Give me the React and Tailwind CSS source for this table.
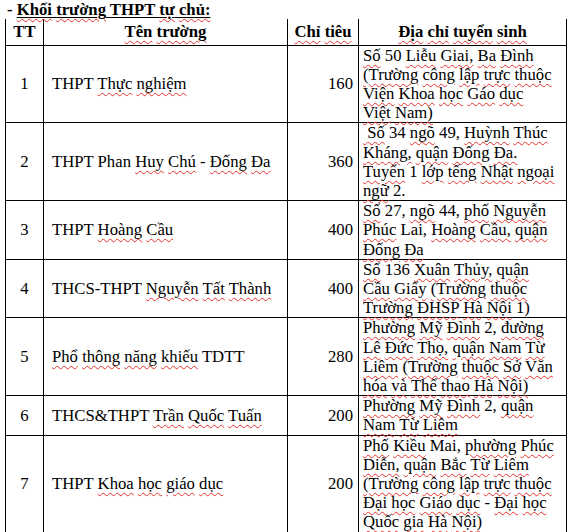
import React from "react";

const NO_UL = new Set(["THPT", "THCS-THPT", "THCS&THPT", "TDTT", "Phan", "-", "Lai,", "Mai,"]);

function Words({ text }) {
  const parts = text.split(" ");
  return (
    <>
      {parts.map((w, i) => {
        const sep = i < parts.length - 1 ? " " : "";
        if (w === "") return <span key={i}>{sep}</span>;
        const plain = NO_UL.has(w) || /^[\d().,]+$/.test(w);
        return (
          <React.Fragment key={i}>
            {plain ? (
              <span>{w}</span>
            ) : (
              <span className="underline decoration-wavy decoration-[#e5322d] decoration-1 underline-offset-[3px]">
                {w}
              </span>
            )}
            {sep}
          </React.Fragment>
        );
      })}
    </>
  );
}

const rows = [
  ["1", "THPT Thực nghiệm", "160", ["Số 50 Liễu Giai, Ba Đình", "(Trường công lập trực thuộc", "Viện Khoa học Gáo dục", "Việt Nam)"]],
  ["2", "THPT Phan Huy Chú - Đống Đa", "360", ["\u00a0Số 34 ngõ 49, Huỳnh Thúc", "Kháng, quận Đống Đa.", "Tuyển 1 lớp tếng Nhật ngoại", "ngữ 2."]],
  ["3", "THPT Hoàng Cầu", "400", ["Số 27, ngõ 44, phố Nguyễn", "Phúc Lai, Hoàng Cầu, quận", "Đống Đa"]],
  ["4", "THCS-THPT Nguyễn Tất Thành", "400", ["Số 136 Xuân Thủy, quận", "Cầu Giấy (Trường thuộc", "Trường ĐHSP Hà Nội 1)"]],
  ["5", "Phổ thông năng khiếu TDTT", "280", ["Phường Mỹ Đình 2, đường", "Lê Đức Thọ, quận Nam Từ", "Liêm (Trường thuộc Sở Văn", "hóa và Thể thao Hà Nội)"]],
  ["6", "THCS&THPT Trần Quốc Tuấn", "200", ["Phường Mỹ Đình 2, quận", "Nam Từ Liêm"]],
  ["7", "THPT Khoa học giáo dục", "200", ["Phố Kiều Mai, phường Phúc", "Diễn, quận Bắc Từ Liêm", "(Trường công lập trực thuộc", "Đại học Giáo dục - Đại học", "Quốc gia Hà Nội)"]],
];

export default function App() {
  return (
    <div
      className="w-[567px] h-[532px] overflow-hidden bg-white text-black text-[16.7px] leading-[19.2px]"
      style={{ fontFamily: '"Liberation Serif", "Times New Roman", serif' }}
    >
      <div className="pl-[7px] h-[19px] font-bold whitespace-nowrap">
        -{" "}
        <span className="underline decoration-black decoration-1 underline-offset-2">
          <Words text="Khối trường" /> THPT <Words text="tự chủ:" />
        </span>
      </div>
      <table className="ml-[5px] w-[561px] table-fixed border-collapse">
        <colgroup>
          <col className="w-[38px]" />
          <col className="w-[244px]" />
          <col className="w-[71px]" />
          <col className="w-[208px]" />
        </colgroup>
        <thead>
          <tr className="h-[26px] font-bold">
            <th className="border border-t-0 border-black text-center align-middle p-0">TT</th>
            <th className="border border-t-0 border-black text-center align-middle p-0">
              <Words text="Tên trường" />
            </th>
            <th className="border border-t-0 border-black text-center align-middle p-0">
              <Words text="Chỉ tiêu" />
            </th>
            <th className="border border-t-0 border-black text-center align-middle p-0">
              <Words text="Địa chỉ tuyển sinh" />
            </th>
          </tr>
        </thead>
        <tbody>
          {rows.map(([tt, name, qty, addr]) => (
            <tr key={tt}>
              <td className="border border-black text-center align-middle p-0">{tt}</td>
              <td className="border border-black align-middle p-0 pl-[8px] whitespace-nowrap">
                <Words text={name} />
              </td>
              <td className="border border-black text-right align-middle p-0 pr-[5px]">{qty}</td>
              <td className="border border-black align-top p-0 pl-[4px]">
                {addr.map((l, i) => (
                  <div key={i} className="whitespace-nowrap">
                    <Words text={l} />
                  </div>
                ))}
              </td>
            </tr>
          ))}
        </tbody>
      </table>
    </div>
  );
}
